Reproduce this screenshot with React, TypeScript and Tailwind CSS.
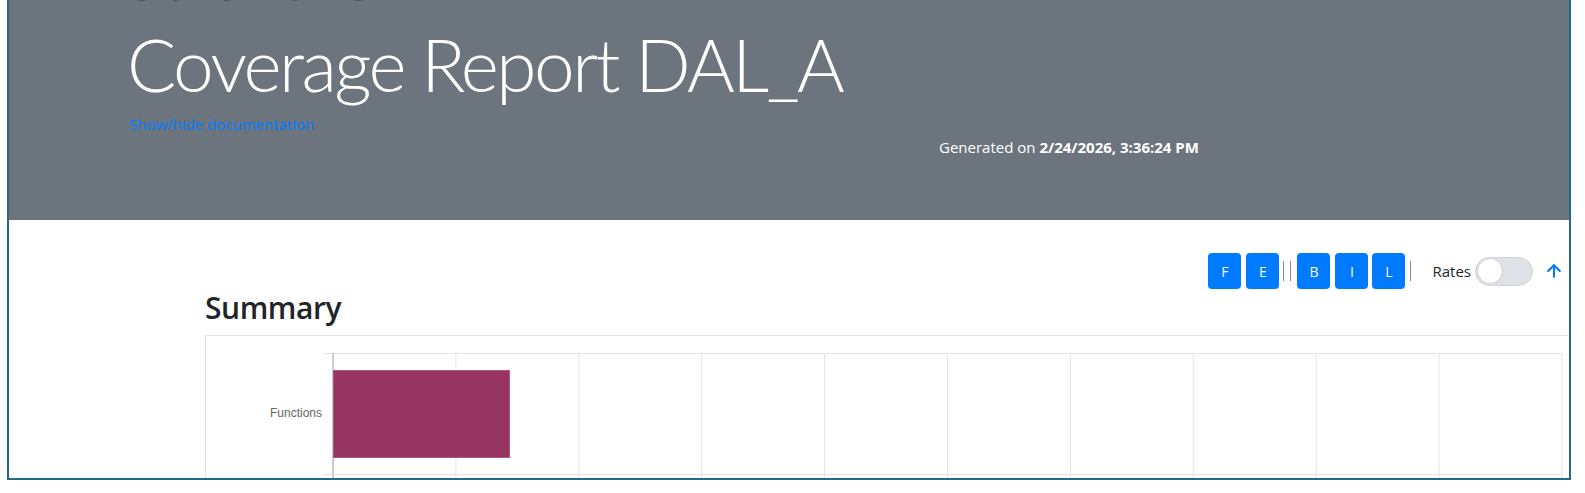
import React, { useState } from 'react';
import { ArrowUp } from 'lucide-react';

const gridXs = Array.from({ length: 11 }, (_, i) => 127 + i * 122.9);

const FilterButton: React.FC<{ label: string; className?: string }> = ({ label, className = '' }) => (
  <button className={`h-[36px] w-[33px] rounded-[4px] bg-[#007bff] text-[14px] text-white ${className}`}>
    {label}
  </button>
);

const Divider: React.FC<{ className?: string }> = ({ className = '' }) => (
  <span className={`h-[20px] w-px bg-[#8a8a8a] ${className}`} />
);

const SummaryChart = () => (
  <div className="mt-[8px] h-[160px] w-[1400px] border border-[#e3e3e3]">
    <svg width="1400" height="160" className="block">
      <line x1="117" y1="17.5" x2="1356" y2="17.5" stroke="#e4e4e4" />
      <line x1="117" y1="138.5" x2="1356" y2="138.5" stroke="#e4e4e4" />
      {gridXs.map((x, i) => (
        <line
          key={x}
          x1={x}
          y1="17"
          x2={x}
          y2="160"
          stroke={i === 0 ? '#bdbdbd' : '#e4e4e4'}
          strokeWidth={i === 0 ? 1.5 : 1}
        />
      ))}
      <rect x="127.5" y="34.5" width="176" height="87" fill="#973461" stroke="#b0577f" />
      <text
        x="116"
        y="81"
        textAnchor="end"
        fontSize="12"
        fill="#666"
        fontFamily="'Liberation Sans', Arial, sans-serif"
      >
        Functions
      </text>
    </svg>
  </div>
);

export default function App() {
  const [rates, setRates] = useState(false);

  return (
    <div className="h-[493px] bg-white pl-[7px] pr-[14px] font-['Open_Sans',sans-serif] text-[#212529]">
      <div className="h-[480px] overflow-hidden border-x-2 border-b-2 border-[#23698a]">
        <header className="h-[220px] overflow-hidden bg-[#6c757d] pl-[120px]">
          {/* page title scrolled mostly out of view */}
          <div className="flow-root h-[28px]">
            <p className="-mt-[48px] text-[54px] leading-none font-bold text-[#343a40]">Software</p>
          </div>
          <h1 className="-ml-[2px] font-['Lato',sans-serif] text-[73px] leading-none font-light tracking-[-0.035em] text-white">
            Coverage Report DAL_A
          </h1>
          <a href="#" className="mt-[12px] block text-[15px] leading-[22px] text-[#007bff]">
            Show/hide documentation
          </a>
          <p className="mt-[2px] ml-[810px] text-[15px] leading-[21px] text-white">
            Generated on <b>2/24/2026, 3:36:24 PM</b>
          </p>
        </header>

        <main>
          <div className="mt-[33px] flex h-[36px] items-center justify-end pr-[5px]">
            <FilterButton label="F" />
            <FilterButton label="E" className="ml-[5px]" />
            <Divider className="ml-[4px]" />
            <Divider className="ml-[6px]" />
            <FilterButton label="B" className="ml-[6px]" />
            <FilterButton label="I" className="ml-[5px] w-[29px]" />
            <FilterButton label="L" className="ml-[4px]" />
            <Divider className="ml-[5px]" />
            <span className="ml-[21px] text-[15px]">Rates</span>
            <button
              onClick={() => setRates(!rates)}
              className="ml-[4px] flex h-[29px] w-[58px] items-center rounded-full border border-[#d0d4d8] bg-[#dee2e6] p-px"
            >
              <span className="h-[26px] w-[26px] rounded-full border border-[#cfd3d7] bg-white" />
            </button>
            <ArrowUp className="ml-[11px] h-[20px] w-[20px] text-[#007bff]" strokeWidth={2.5} />
          </div>

          <section className="pl-[196px]">
            <h2 className="text-[30px] leading-[38px] font-semibold tracking-[-0.015em] text-[#212529]">
              Summary
            </h2>
            <SummaryChart />
          </section>
        </main>
      </div>
    </div>
  );
}
